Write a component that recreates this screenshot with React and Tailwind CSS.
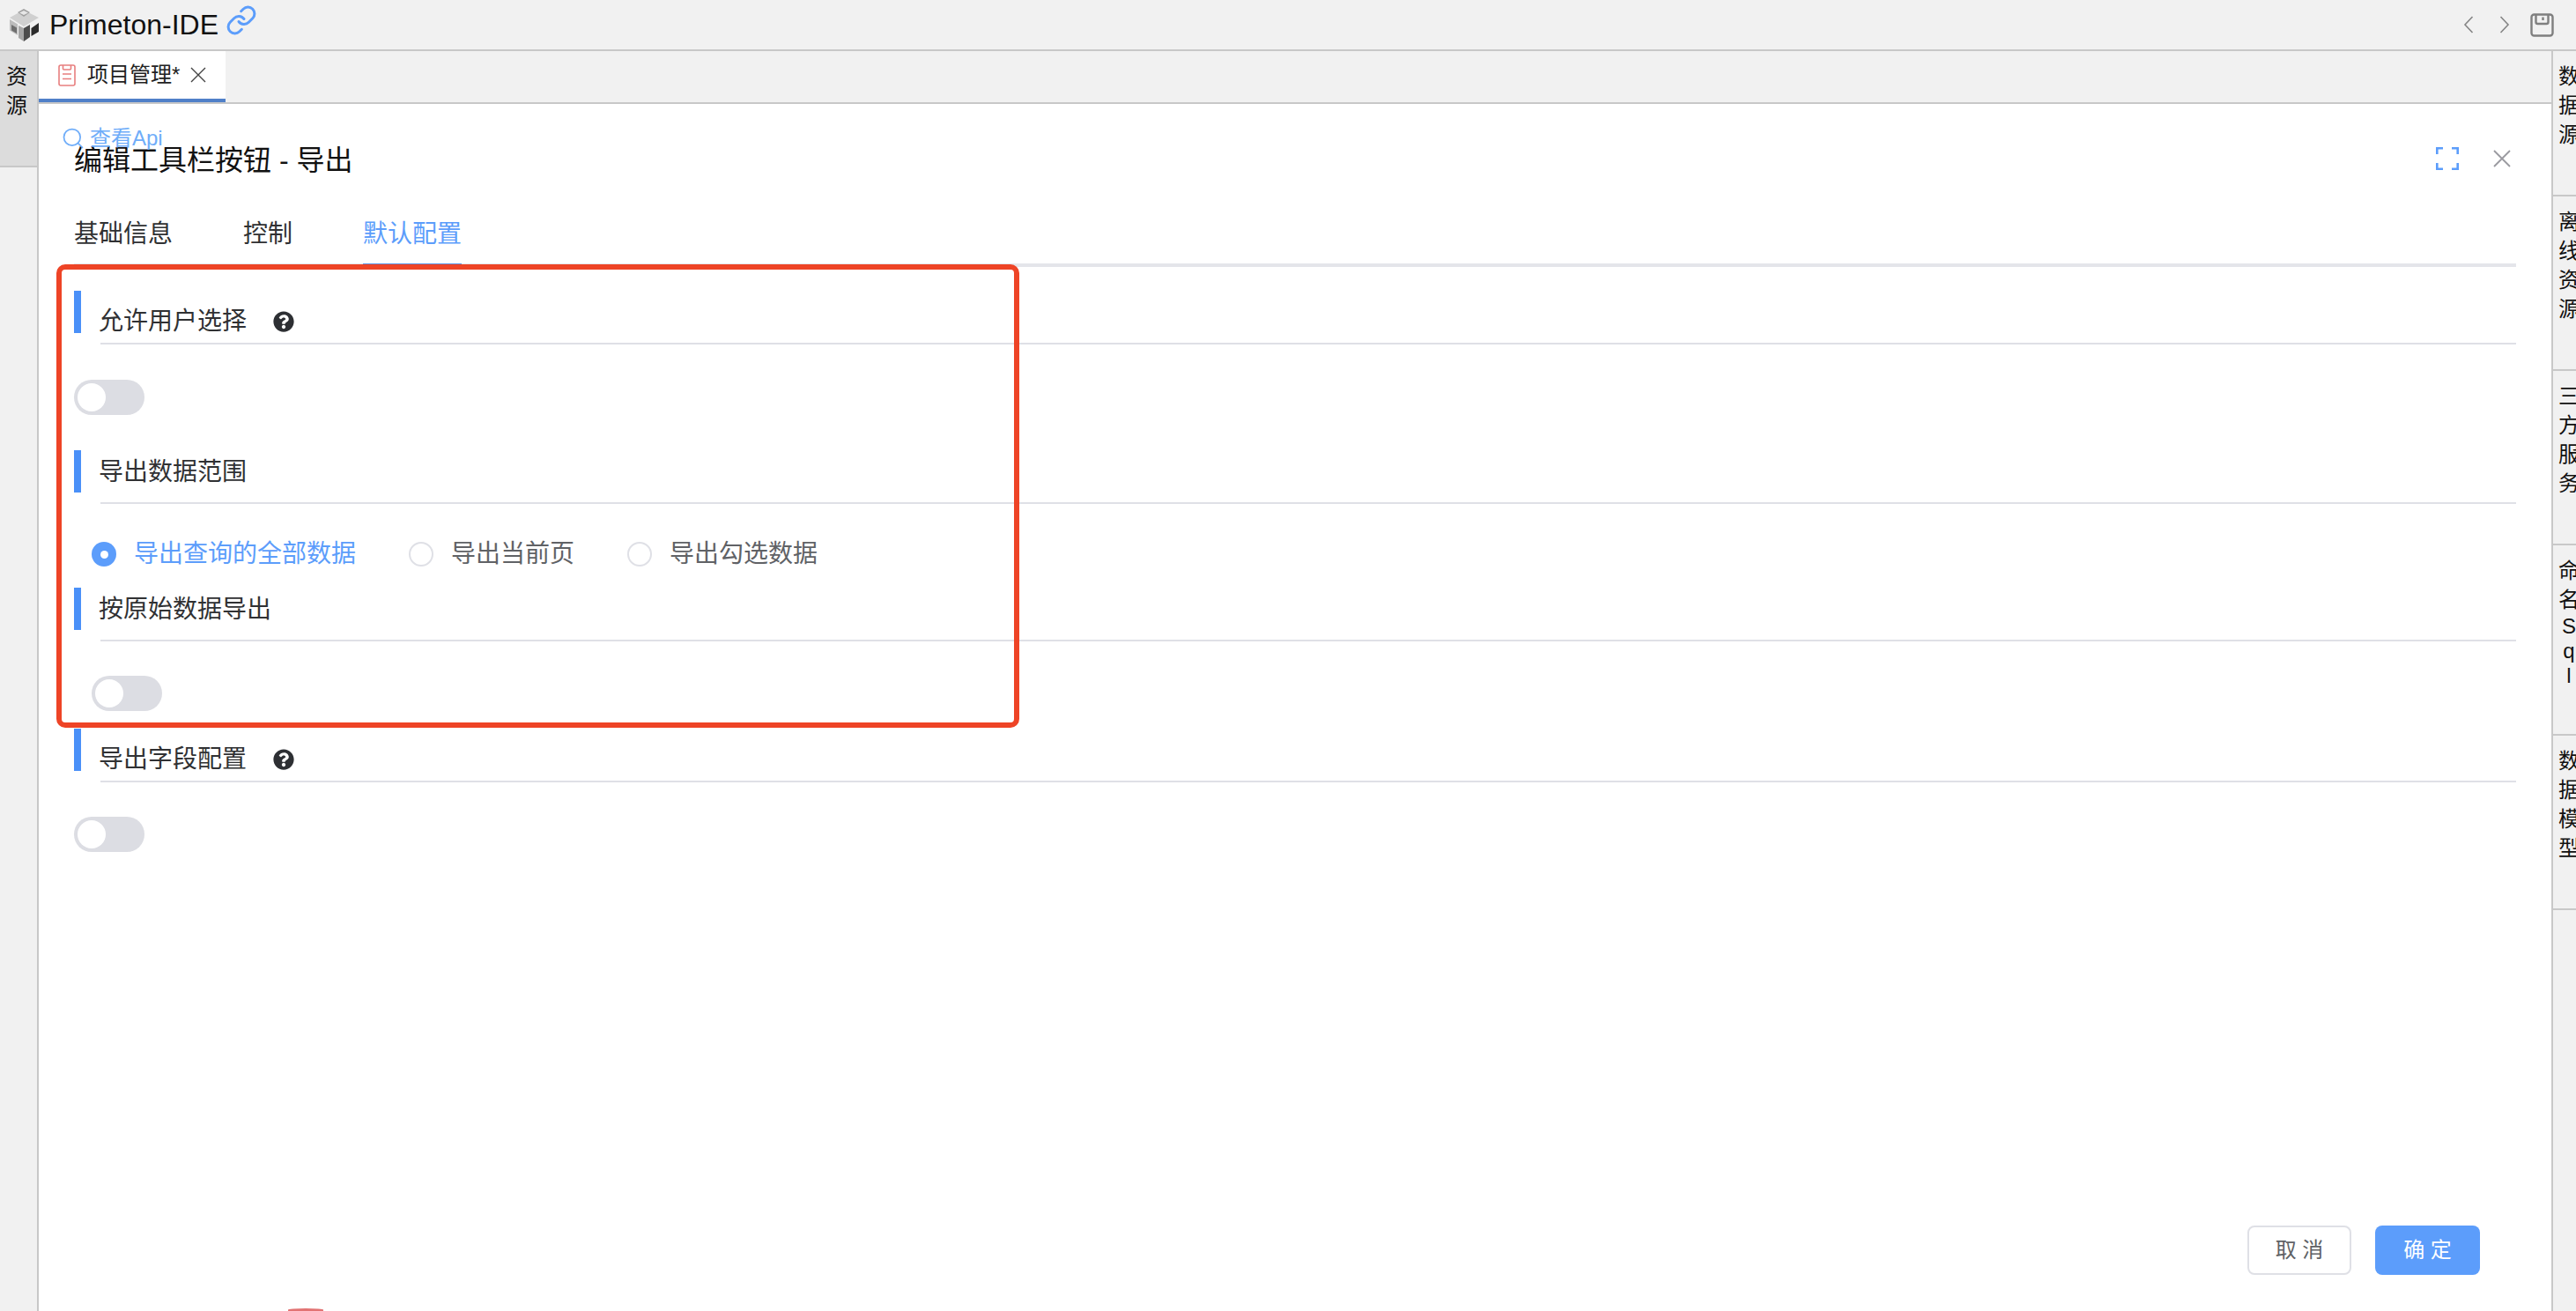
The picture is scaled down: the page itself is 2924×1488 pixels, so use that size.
import { Link, Search } from 'lucide-react'
import { FaQuestionCircle } from 'react-icons/fa'

const leftItems = [{ label: '资源', active: true }]
const rightItems = [
  { label: '数据源' },
  { label: '离线资源' },
  { label: '三方服务' },
  { label: '命名Sql' },
  { label: '数据模型' },
]

function Logo() {
  return (
    <svg width="33" height="37" viewBox="0 0 33 37" className="shrink-0">
      <polygon points="0,10 11,4 16,7 21,4 33,10 16,20" fill="#d0d0d0" />
      <polygon points="16,0 23,4 16,9 9,4" fill="#a0a0a0" />
      <polygon points="16,2 21,4.5 16,7 11,4.5" fill="#e6e6e6" />
      <polygon points="0,12 9,17.5 9,30 0,24.5" fill="#bcbcbc" />
      <polygon points="2,18 8,21.5 8,28 2,24.5" fill="#6f6f6f" />
      <polygon points="10,19 16,22 16,37 10,33" fill="#a6a6a6" />
      <polygon points="16,22 23,18 23,32 16,37" fill="#4c4c4c" />
      <polygon points="24.5,22 33,16 33,26 24.5,31" fill="#2c2c2c" />
    </svg>
  )
}

function RailCell({ label, active }) {
  return (
    <div className={`flex flex-col items-center pt-3 pr-1 pb-[52px] border-b-2 border-[#c8c8c8] text-[24px] text-[#111] ${active ? 'bg-[#dcdcdc]' : ''}`}>
      {[...label].map((c, i) => (
        <span key={i} className={/[a-zA-Z]/.test(c) ? 'leading-[28px]' : 'leading-[33px]'}>{c}</span>
      ))}
    </div>
  )
}

function Toggle({ className = '' }) {
  return (
    <div className={`w-20 h-10 rounded-full bg-[#dcdde3] p-1 ${className}`}>
      <div className="w-8 h-8 rounded-full bg-white" />
    </div>
  )
}

function SectionHeader({ title, help }) {
  return (
    <div className="flex">
      <div className="w-2 h-12 bg-[#4a90f8]" />
      <div className={`ml-[22px] flex-1 h-[61px] border-b-2 border-[#dfe0e6] flex items-start gap-[30px] ${help ? 'pt-[21px]' : 'pt-[11px]'}`}>
        <span className="-ml-0.5 text-[28px] leading-[28px] text-[#303133]">{title}</span>
        {help && <FaQuestionCircle size={24} className="text-[#2d2f33] mt-0.5" />}
      </div>
    </div>
  )
}

function Radio({ label, checked }) {
  return (
    <div className="flex items-center gap-5">
      {checked ? (
        <div className="w-7 h-7 rounded-full bg-[#5c9dfb] flex items-center justify-center">
          <div className="w-[9px] h-[9px] rounded-full bg-white" />
        </div>
      ) : (
        <div className="w-7 h-7 rounded-full border-2 border-[#dfe0e6] bg-white" />
      )}
      <span className={`text-[28px] leading-[32px] ${checked ? 'text-[#5c9dfb]' : 'text-[#606266]'}`}>{label}</span>
    </div>
  )
}

export default function App() {
  return (
    <div className="relative w-[2924px] h-[1488px] overflow-hidden flex flex-col bg-[#f1f1f1] font-['Liberation_Sans','Noto_Sans_CJK_SC',sans-serif]">
      {/* Top bar */}
      <div className="h-[58px] shrink-0 border-b-2 border-[#c8c8c8] flex items-center pl-[11px] pr-[25px]">
        <Logo />
        <span className="ml-3 text-[32px] leading-[40px] text-[#111]">Primeton-IDE</span>
        <Link size={36} strokeWidth={2} className="ml-2 -mt-[10px] text-[#5c9dfb]" />
        <div className="ml-auto flex items-center">
          <svg width="12" height="20" viewBox="0 0 12 20" fill="none" stroke="#858585" strokeWidth="1.6">
            <path d="M10.5 1 L2 10 L10.5 19" />
          </svg>
          <svg width="12" height="20" viewBox="0 0 12 20" fill="none" stroke="#858585" strokeWidth="1.6" className="ml-[29px]">
            <path d="M1.5 1 L10 10 L1.5 19" />
          </svg>
          <svg width="27" height="27" viewBox="0 0 27 27" fill="none" stroke="#7f7f7f" strokeWidth="2.4" className="ml-[23px]">
            <rect x="1.5" y="1.5" width="24" height="24" rx="3" />
            <path d="M6.5 1.5 V10 a2 2 0 0 0 2 2 H18.5 a2 2 0 0 0 2 -2 V1.5" />
            <path d="M14.5 4.5 V8" />
          </svg>
        </div>
      </div>

      <div className="flex flex-1 min-h-0">
        {/* Left rail */}
        <div className="w-11 shrink-0 border-r-2 border-[#c8c8c8]">
          {leftItems.map((item) => (
            <RailCell key={item.label} {...item} />
          ))}
        </div>

        {/* Main */}
        <div className="w-[2852px] shrink-0 flex flex-col">
          <div className="h-[60px] shrink-0 border-b-2 border-[#c8c8c8] flex">
            <div className="w-[212px] h-[58px] bg-white border-b-4 border-[#5080c8] flex items-center pl-[22px]">
              <svg width="20" height="25" viewBox="0 0 20 25" fill="none" stroke="#e87f7f" strokeWidth="1.6">
                <rect x="1" y="1" width="18" height="23" rx="2" />
                <path d="M5.5 1 V5 a1 1 0 0 0 1 1 H13.5 a1 1 0 0 0 1 -1 V1" />
                <path d="M5 11 H15 M5 16.5 H15" />
              </svg>
              <span className="ml-[13px] text-[24px] leading-[32px] text-[#222]">项目管理*</span>
              <svg width="18" height="18" viewBox="0 0 18 18" fill="none" stroke="#444" strokeWidth="1.4" className="ml-3">
                <path d="M1 1 L17 17 M17 1 L1 17" />
              </svg>
            </div>
          </div>

          <div className="relative flex-1 min-h-0 bg-white px-10 pt-[42px] pb-[41px] flex flex-col">
            {/* Api link sits on top of the title, as in the app */}
            <div className="absolute left-[25px] top-[24px] flex items-center gap-[5px] text-[#6fadf9]">
              <Search size={28} strokeWidth={1.5} />
              <span className="text-[24px] leading-[30px]">查看Api</span>
            </div>

            <div className="flex items-center justify-between pr-1.5 h-[44px]">
              <span className="text-[32px] leading-[44px] text-[#111]">编辑工具栏按钮 - 导出</span>
              <div className="-mt-1 flex items-center gap-[39px]">
                <svg width="26" height="26" viewBox="0 0 26 26" fill="none" stroke="#5c9dfb" strokeWidth="2.6">
                  <path d="M1.3 8 V1.3 H8 M18 1.3 H24.7 V8 M24.7 18 V24.7 H18 M8 24.7 H1.3 V18" />
                </svg>
                <svg width="20" height="20" viewBox="0 0 20 20" fill="none" stroke="#9a9aa0" strokeWidth="1.8">
                  <path d="M1 1 L19 19 M19 1 L1 19" />
                </svg>
              </div>
            </div>

            {/* Tabs */}
            <div className="mt-11 h-[55px] border-b-4 border-[#e4e5ea] flex gap-20 text-[28px] leading-[32px]">
              <span className="pt-0.5 text-[#303133]">基础信息</span>
              <span className="pt-0.5 text-[#303133]">控制</span>
              <span className="pt-0.5 h-[55px] border-b-4 border-[#5c8fdf] text-[#5c9dfb]">默认配置</span>
            </div>

            <div className="mt-[27px]">
              <SectionHeader title="允许用户选择" help />
              <Toggle className="mt-10" />
            </div>

            <div className="mt-10">
              <SectionHeader title="导出数据范围" />
              <div className="mt-[41px] ml-5 flex gap-[60px]">
                <Radio label="导出查询的全部数据" checked />
                <Radio label="导出当前页" />
                <Radio label="导出勾选数据" />
              </div>
            </div>

            <div className="mt-[22px]">
              <SectionHeader title="按原始数据导出" />
              <Toggle className="mt-[39px] ml-5" />
            </div>

            <div className="mt-5">
              <SectionHeader title="导出字段配置" help />
              <Toggle className="mt-[39px]" />
            </div>

            <div className="mt-auto flex justify-end gap-[27px] pr-[41px] text-[24px]">
              <button className="w-[118px] h-14 rounded-lg border-2 border-[#dfe0e6] bg-white text-[#606266]">取 消</button>
              <button className="w-[119px] h-14 rounded-lg bg-[#5c9dfb] text-white">确 定</button>
            </div>

            {/* Annotation drawn over the screenshot */}
            <div className="absolute left-5 top-[182px] w-[1093px] h-[526px] border-[6px] border-[#ee4426] rounded-[10px]" />
            {/* Edge of a floating button peeking in at the bottom */}
            <div className="absolute left-[283px] bottom-0 w-[40px] h-[3px] rounded-t-[100%] bg-[#e27373]" />
          </div>
        </div>

        {/* Right rail, cut off by the window */}
        <div className="w-[42px] shrink-0 border-l-2 border-[#c8c8c8]">
          {rightItems.map((item) => (
            <RailCell key={item.label} {...item} />
          ))}
        </div>
      </div>
    </div>
  )
}
